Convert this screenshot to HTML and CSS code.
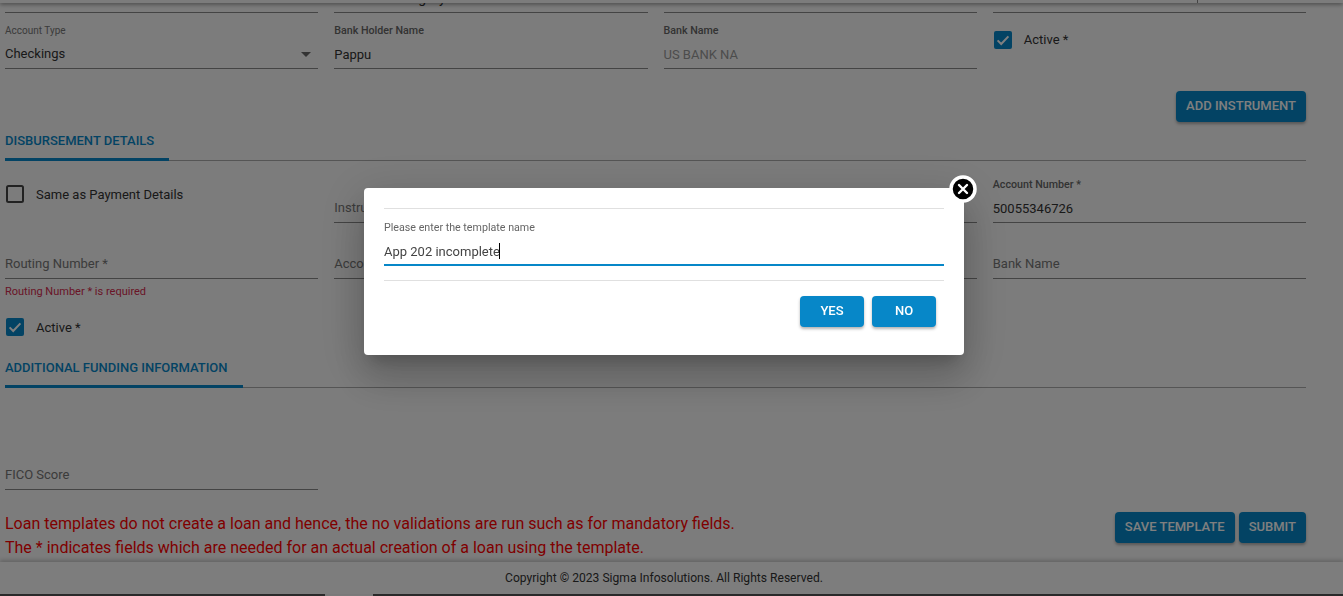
FILE: index.html
```html
<!DOCTYPE html>
<html lang="en">
<head>
<meta charset="utf-8">
<title>Loan template</title>
<link rel="stylesheet" href="styles.css">
</head>
<body>
<div class="page">
  <div class="topbar"><span class="topbar-rule"></span></div>
  <main class="content">
    <div class="grid row-cut">
      <div class="cut"></div>
      <div class="cut"><span class="value cut-value">Account Category</span></div>
      <div class="cut"></div>
      <div class="cut"></div>
    </div>
    <div class="grid row-next">
      <div class="field field-filled">
        <span class="label label-light">Account Type</span>
        <div class="value select"><span class="select-text">Checkings</span><span class="arrow"></span></div>
      </div>
      <div class="field field-filled">
        <span class="label">Bank Holder Name</span>
        <span class="value">Pappu</span>
      </div>
      <div class="field field-filled">
        <span class="label">Bank Name</span>
        <span class="value muted">US BANK NA</span>
      </div>
      <div class="check check-top">
        <svg class="box" viewBox="0 0 18 18"><rect width="18" height="18" rx="2" fill="#0787c8"/><path d="M3.6 9.4l3.6 3.6 7.2-7.6" fill="none" stroke="#fff" stroke-width="2"/></svg>
        <span class="check-label">Active *</span>
      </div>
    </div>
    <div class="actions actions-add"><button class="btn">ADD INSTRUMENT</button></div>
    <div class="section section-first"><h2 class="section-title">DISBURSEMENT DETAILS</h2></div>
    <div class="grid row-a">
      <div class="check check-same">
        <svg class="box" viewBox="0 0 18 18"><rect x="1" y="1" width="16" height="16" rx="1.5" fill="none" stroke="#444" stroke-width="2"/></svg>
        <span class="check-label">Same as Payment Details</span>
      </div>
      <div class="field"><span class="label"></span><span class="value placeholder">Instrument</span></div>
      <div class="field"><span class="label"></span><span class="value placeholder"></span></div>
      <div class="field field-filled"><span class="label">Account Number *</span><span class="value">50055346726</span></div>
    </div>
    <div class="grid row-next">
      <div class="field"><span class="label"></span><span class="value placeholder">Routing Number *</span></div>
      <div class="field"><span class="label"></span><span class="value placeholder">Account</span></div>
      <div class="field"><span class="label"></span><span class="value placeholder"></span></div>
      <div class="field"><span class="label"></span><span class="value placeholder">Bank Name</span></div>
    </div>
    <div class="error">Routing Number * is required</div>
    <div class="check check-active">
      <svg class="box" viewBox="0 0 18 18"><rect width="18" height="18" rx="2" fill="#0787c8"/><path d="M3.6 9.4l3.6 3.6 7.2-7.6" fill="none" stroke="#fff" stroke-width="2"/></svg>
      <span class="check-label">Active *</span>
    </div>
    <div class="section section-second"><h2 class="section-title">ADDITIONAL FUNDING INFORMATION</h2></div>
    <div class="grid row-fico">
      <div class="field"><span class="label"></span><span class="value placeholder">FICO Score</span></div>
    </div>
    <div class="notes">
      <p class="note">Loan templates do not create a loan and hence, the no validations are run such as for mandatory fields.<br>The * indicates fields which are needed for an actual creation of a loan using the template.</p>
      <div class="actions-end">
        <button class="btn">SAVE TEMPLATE</button>
        <button class="btn">SUBMIT</button>
      </div>
    </div>
  </main>
  <footer class="footer">Copyright © 2023 Sigma Infosolutions. All Rights Reserved.</footer>
  <div class="taskbar"><span class="taskbar-gap"></span></div>
</div>
<div class="overlay"></div>
<div class="modal">
  <button class="close" aria-label="Close">
    <svg viewBox="0 0 28 28" width="28" height="28"><circle cx="14" cy="14" r="12" fill="#000" stroke="#fff" stroke-width="3.5"/><path d="M10 10l8 8M18 10l-8 8" stroke="#fff" stroke-width="2.4" stroke-linecap="round"/></svg>
  </button>
  <hr class="rule">
  <div class="modal-label">Please enter the template name</div>
  <div class="modal-input">App 202 incomplete<span class="caret"></span></div>
  <hr class="rule rule-low">
  <div class="modal-actions">
    <button class="btn btn-modal">YES</button>
    <button class="btn btn-modal">NO</button>
  </div>
</div>
</body>
</html>
```
FILE: styles.css
```css
* { box-sizing: border-box; }
html, body { margin: 0; height: 596px; overflow: hidden; }
body { font-family: Roboto, "Liberation Sans", sans-serif; font-size: 13px; color: #444; background: #f8f8f8; }

.page { height: 596px; display: flex; flex-direction: column; }
.topbar { height: 3px; flex: none; display: flex; justify-content: flex-end; background: #f8f8f8; box-shadow: 0 1px 4px rgba(0,0,0,.55); position: relative; z-index: 2; }
.topbar-rule { width: 1px; height: 3px; margin-right: 145px; background: #888; }
.content { flex: 1; min-height: 0; overflow: hidden; padding: 0 37px 0 5px; }

.grid { display: grid; grid-template-columns: repeat(4, 1fr); column-gap: 16px; }
.row-cut { height: 10px; }
.cut { height: 10px; border-bottom: 1px solid #888; overflow: hidden; display: flex; align-items: flex-end; padding-bottom: 4px; }
.row-next { margin-top: 10px; }
.row-a { margin-top: 16px; }
.row-fico { margin-top: 56px; }

.field { height: 46px; display: flex; flex-direction: column; border-bottom: 1px solid #888; padding-bottom: 4px; }
.field-filled { padding-top: 1px; padding-bottom: 3px; }
.label { height: 14px; margin-bottom: 7px; font-size: 10.7px; line-height: 14px; color: #666; font-weight: 500; flex: none; }
.label-light { font-size: 10px; font-weight: 400; color: #777; }
.value { height: 20px; line-height: 20px; font-size: 13px; color: #333; flex: none; }
.cut-value { font-size: 14px; }
.muted { color: #999; }
.placeholder { color: #777; }
.select { display: flex; align-items: center; justify-content: space-between; margin-top: -1px; padding-right: 7px; }
.arrow { width: 0; height: 0; border-left: 5px solid transparent; border-right: 5px solid transparent; border-top: 5px solid #666; margin-top: 1px; }

.check { display: flex; align-items: center; }
.box { width: 18px; height: 18px; flex: none; margin-left: 1px; }
.check-label { margin-left: 12px; font-size: 13px; color: #333; }
.check-top { height: 18px; margin-top: 8px; }
.check-top .check-label { padding-bottom: 2px; }
.check-same { height: 18px; margin-top: 8px; align-self: start; }
.check-active { height: 18px; margin-top: 19px; }

.btn { height: 31px; padding: 0 10px 2px; border: 0; border-radius: 4px; background: #0787c8; color: #fff; font: 500 13px/29px Roboto, "Liberation Sans", sans-serif; box-shadow: 0 2px 3px rgba(0,0,0,.3); }
.actions { display: flex; justify-content: flex-end; }
.actions-add { margin-top: 22px; }

.section { border-bottom: 1px solid #aaa; }
.section-first { height: 30px; margin-top: 9px; }
.section-second { height: 31px; margin-top: 21px; }
.section-title { display: inline-block; margin: 0; height: calc(100% + 1px); padding-right: 15px; line-height: 20px; font-size: 13px; font-weight: 500; color: #0787c8; border-bottom: 3px solid #0787c8; }
.section-second .section-title { padding-top: 1px; }

.error { margin-top: 6px; height: 14px; font-size: 11px; line-height: 14px; color: #d42a4e; }

.notes { margin-top: 22px; display: flex; justify-content: space-between; align-items: flex-start; }
.note { margin: 0; font-size: 16px; line-height: 24px; color: #f00; }
.actions-end { display: flex; gap: 4px; }

.footer { height: 32px; flex: none; display: flex; align-items: center; justify-content: center; padding-right: 15px; font-size: 12.1px; color: #333; background: #fafafa; box-shadow: 0 -2px 4px rgba(0,0,0,.2); position: relative; }
.taskbar { height: 2px; flex: none; background: #555; display: flex; }
.taskbar-gap { width: 48px; margin-left: 325px; background: #f8f8f8; }

.overlay { position: fixed; inset: 0; background: rgba(0,0,0,.5); z-index: 5; }
.modal { position: fixed; left: 364px; top: 188px; width: 600px; height: 167px; padding: 20px; background: #fff; border-radius: 4px; z-index: 6; box-shadow: 0 11px 15px -7px rgba(0,0,0,.2), 0 24px 38px 3px rgba(0,0,0,.14), 0 9px 46px 8px rgba(0,0,0,.12); }
.close { position: absolute; right: -13px; top: -13px; width: 28px; height: 28px; padding: 0; border: 0; background: none; display: block; }
.rule { margin: 0; height: 1px; border: 0; background: #e0e0e0; }
.rule-low { margin-top: 14px; }
.modal-label { margin-top: 12px; height: 14px; font-size: 10.7px; line-height: 14px; color: #666; }
.modal-input { margin-top: 7px; height: 24px; line-height: 20px; font-size: 13px; color: #444; border-bottom: 2px solid #0787c8; }
.caret { display: inline-block; width: 1px; height: 16px; margin-left: -1px; background: #000; vertical-align: -3px; }
.modal-actions { margin-top: 15px; padding-right: 8px; display: flex; justify-content: flex-end; gap: 8px; }
.btn-modal { width: 64px; padding: 0 0 2px; }
```
